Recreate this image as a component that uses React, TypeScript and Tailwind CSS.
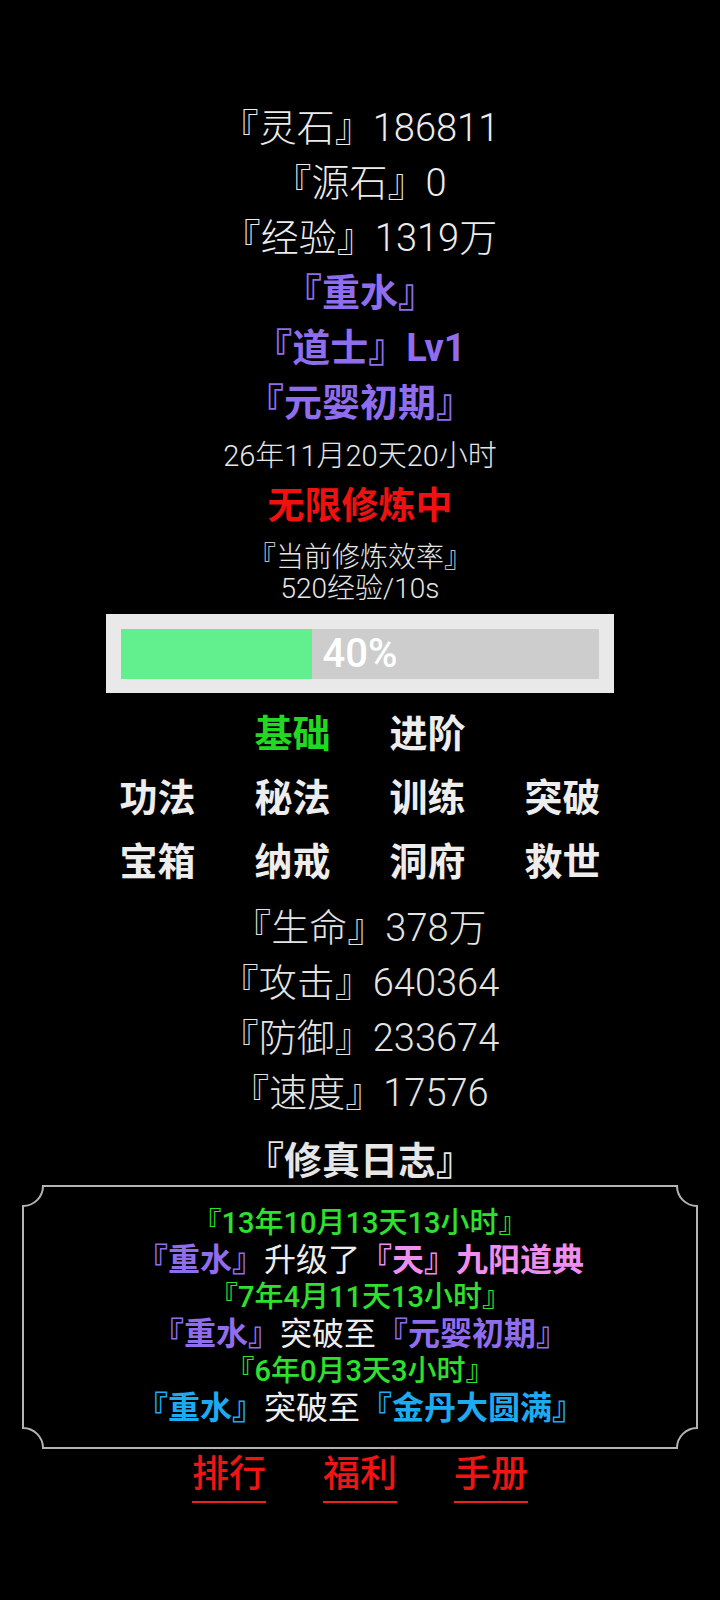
import type { ReactNode } from "react";

const FONT = "font-['Roboto','Noto_Sans_CJK_SC',sans-serif]";

const topLines = ["『灵石』186811", "『源石』0", "『经验』1319万"];
const purpleLines = ["『重水』", "『道士』Lv1", "『元婴初期』"];
const stats = ["『生命』378万", "『攻击』640364", "『防御』233674", "『速度』17576"];

const navRows: (string | null)[][] = [
  [null, "基础", "进阶", null],
  ["功法", "秘法", "训练", "突破"],
  ["宝箱", "纳戒", "洞府", "救世"],
];

function LogDate({ children }: { children: ReactNode }) {
  return <p className="text-[29px] font-medium leading-[36px] text-[#2fe02f]">{children}</p>;
}

function LogEvent({ children }: { children: ReactNode }) {
  return <p className="text-[32px] leading-[38px]">{children}</p>;
}

function LogFrame() {
  // concave corners, drawn over the box
  const w = 674;
  const h = 262;
  const r = 20;
  const d = `M${r},0 H${w - r} A${r},${r} 0 0 0 ${w},${r} V${h - r} A${r},${r} 0 0 0 ${w - r},${h} H${r} A${r},${r} 0 0 0 0,${h - r} V${r} A${r},${r} 0 0 0 ${r},0 Z`;
  return (
    <svg className="pointer-events-none absolute inset-0 overflow-visible" width={w} height={h} aria-hidden="true">
      <path d={d} fill="none" stroke="#b4b4b4" strokeWidth={2} />
    </svg>
  );
}

export default function App() {
  const progress = 40;

  return (
    <div className={`${FONT} flex min-h-[1600px] flex-col items-center bg-black pt-[101px] text-center`}>
      {/* resources */}
      {topLines.map((t) => (
        <p key={t} className="text-[38px] font-light leading-[55px] text-[#ececec]">
          {t}
        </p>
      ))}
      {purpleLines.map((t) => (
        <p key={t} className="text-[38px] font-bold leading-[55px] text-[#8f6ded]">
          {t}
        </p>
      ))}

      <p className="text-[29px] font-light leading-[50px] text-[#e6e6e6]">26年11月20天20小时</p>
      <p className="text-[37px] font-bold leading-[52px] text-[#f01010]">无限修炼中</p>
      <div className="mt-[9px] text-[28px] font-light leading-[31px] text-[#e6e6e6]">
        <p>『当前修炼效率』</p>
        <p>520经验/10s</p>
      </div>

      {/* progress */}
      <div className="mt-[10px] w-[508px] bg-[#e9e9e9] px-[15px] pb-[14px] pt-[15px]">
        <div className="relative h-[50px] bg-[#cdcdcd]">
          <div className="h-full bg-[#62f08e]" style={{ width: `${progress}%` }} />
          <span className="absolute inset-0 flex items-center justify-center text-[40px] font-medium text-white">
            {progress}%
          </span>
        </div>
      </div>

      {/* menu */}
      <div className="mt-[9px] grid grid-cols-[repeat(4,135px)]">
        {navRows.flat().map((item, i) => (
          <span
            key={i}
            className={`text-[38px] font-bold leading-[64px] ${item === "基础" ? "text-[#22d822]" : "text-[#ededed]"}`}
          >
            {item ?? ""}
          </span>
        ))}
      </div>

      {/* attributes */}
      <div className="mt-[7px]">
        {stats.map((t) => (
          <p key={t} className="text-[38px] font-light leading-[55px] text-[#e4e4e4]">
            {t}
          </p>
        ))}
      </div>

      <p className="mt-[15px] text-[38px] font-bold leading-[50px] text-[#e6e6e6]">『修真日志』</p>

      {/* log */}
      <div className="relative h-[262px] w-[674px] pt-[19px]">
        <LogFrame />
        <LogDate>『13年10月13天13小时』</LogDate>
        <LogEvent>
          <span className="font-bold text-[#8f6ded]">『重水』</span>
          <span className="text-[#ededed]">升级了</span>
          <span className="font-bold text-[#f08ef0]">『天』九阳道典</span>
        </LogEvent>
        <LogDate>『7年4月11天13小时』</LogDate>
        <LogEvent>
          <span className="font-bold text-[#8f6ded]">『重水』</span>
          <span className="text-[#ededed]">突破至</span>
          <span className="font-bold text-[#8f6ded]">『元婴初期』</span>
        </LogEvent>
        <LogDate>『6年0月3天3小时』</LogDate>
        <LogEvent>
          <span className="font-bold text-[#1eaaf0]">『重水』</span>
          <span className="text-[#ededed]">突破至</span>
          <span className="font-bold text-[#1eaaf0]">『金丹大圆满』</span>
        </LogEvent>
      </div>

      {/* footer links */}
      <div className="mt-[7px] flex gap-[57px]">
        {["排行", "福利", "手册"].map((t) => (
          <a key={t} className="border-b-2 border-[#f02020] pb-[6px] text-[37px] font-medium leading-[40px] text-[#f01414]">
            {t}
          </a>
        ))}
      </div>
    </div>
  );
}
